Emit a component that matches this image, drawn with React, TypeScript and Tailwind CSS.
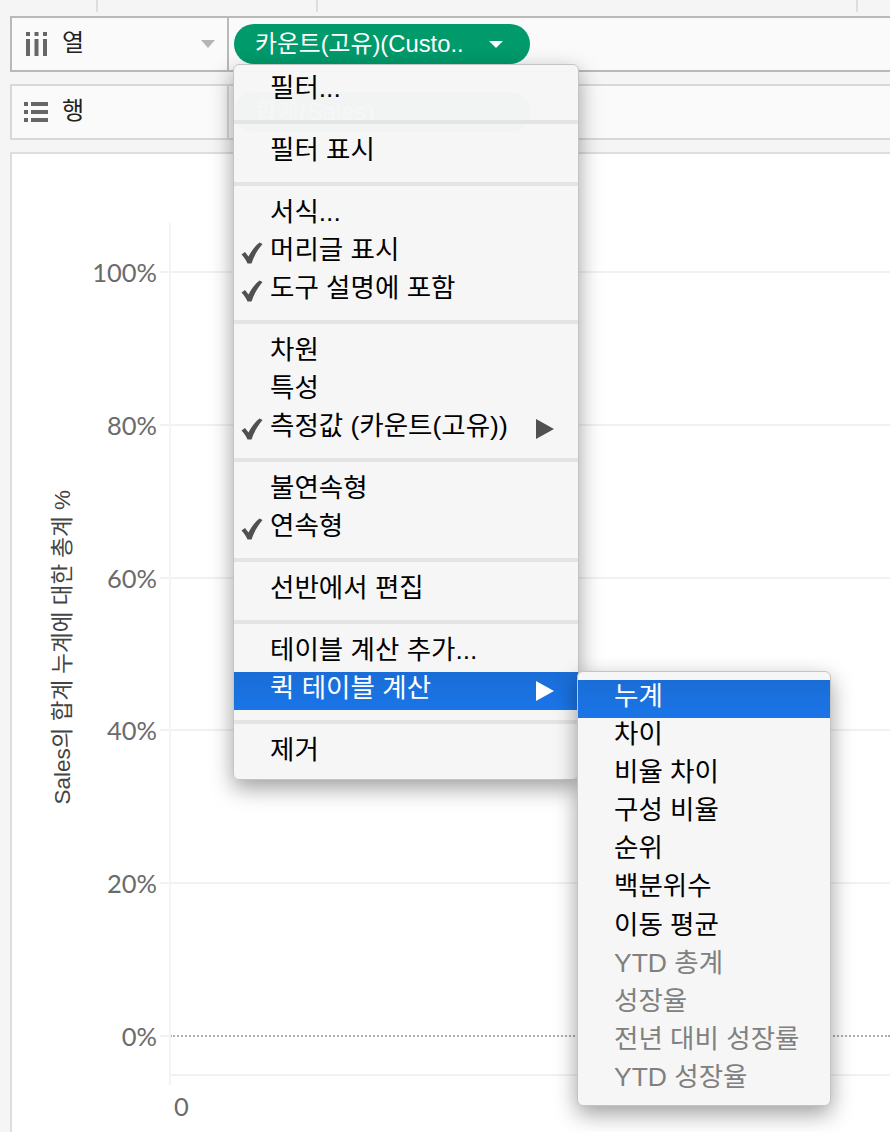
import React from "react";

const FONT = "font-['Liberation_Sans','Noto_Sans_CJK_KR',sans-serif]";

type Item = { label: string; checked?: boolean; arrow?: boolean; active?: boolean };

// sections of the pill's context menu
const MENU: Item[][] = [
  [{ label: "필터..." }],
  [{ label: "필터 표시" }],
  [
    { label: "서식..." },
    { label: "머리글 표시", checked: true },
    { label: "도구 설명에 포함", checked: true },
  ],
  [
    { label: "차원" },
    { label: "특성" },
    { label: "측정값 (카운트(고유))", checked: true, arrow: true },
  ],
  [{ label: "불연속형" }, { label: "연속형", checked: true }],
  [{ label: "선반에서 편집" }],
  [{ label: "테이블 계산 추가..." }, { label: "퀵 테이블 계산", arrow: true, active: true }],
  [{ label: "제거" }],
];

const SUBMENU = [
  { label: "누계", active: true },
  { label: "차이" },
  { label: "비율 차이" },
  { label: "구성 비율" },
  { label: "순위" },
  { label: "백분위수" },
  { label: "이동 평균" },
  { label: "YTD 총계", disabled: true },
  { label: "성장율", disabled: true },
  { label: "전년 대비 성장률", disabled: true },
  { label: "YTD 성장율", disabled: true },
];

const TICKS = ["100%", "80%", "60%", "40%", "20%"];

function CheckMark() {
  return (
    <svg viewBox="0 0 22 22" className="absolute left-[7px] top-[8px] h-[22px] w-[22px]">
      <path d="M0.5 12.5 L4 10 L7.5 14.5 C10 9.5 13.5 4.5 18.5 0.5 L21.5 2 C16.5 8 13 14 10.5 21.5 L6.5 21.5 C5 18 3 15 0.5 12.5 Z" fill="#505050" />
    </svg>
  );
}

function MenuRow({ item }: { item: Item }) {
  return (
    <div
      className={`relative flex h-[38px] items-start pl-[36px] pr-[24px] text-[26.5px] leading-[32px] ${
        item.active ? "bg-gradient-to-b from-[#1a6dd6] to-[#1a75e8] text-white" : "text-black"
      }`}
    >
      {item.checked && <CheckMark />}
      <span className="flex-1 whitespace-nowrap">{item.label}</span>
      {item.arrow && (
        <svg viewBox="0 0 18 20" className="mt-[9px] h-5 w-[18px]">
          <path d="M0 0 L18 10 L0 20 Z" fill={item.active ? "#ffffff" : "#505050"} />
        </svg>
      )}
    </div>
  );
}

function ContextMenu() {
  return (
    <div className="absolute left-[233px] top-[64px] z-10 w-[346px] rounded-md border border-[#c4c4c4] bg-[#f6f6f6]/[.98] pt-[7px] shadow-[0_8px_22px_rgba(0,0,0,0.38)]">
      {MENU.map((section, i) => (
        <div key={i} className={i > 0 ? "border-t-4 border-[#e4e4e4] pt-[10px]" : ""}>
          {section.map((item) => (
            <MenuRow key={item.label} item={item} />
          ))}
          <div className={i === MENU.length - 1 ? "h-[7px]" : "h-[10px]"} />
        </div>
      ))}
    </div>
  );
}

function SubMenu() {
  return (
    <div className="absolute left-[577px] top-[671px] z-20 w-[254px] rounded-md border border-[#c4c4c4] bg-[#f6f6f6] pb-[6px] pt-2 shadow-[0_8px_22px_rgba(0,0,0,0.38)]">
      {SUBMENU.map((item) => (
        <div
          key={item.label}
          className={`h-[38.1px] whitespace-nowrap pl-[36px] text-[26.5px] leading-[32px] ${
            item.active
              ? "bg-gradient-to-b from-[#1a6dd6] to-[#1a75e8] text-white"
              : item.disabled
                ? "text-[#808080]"
                : "text-black"
          }`}
        >
          {item.label}
        </div>
      ))}
    </div>
  );
}

function Pill({ label, up }: { label: string; up?: boolean }) {
  return (
    <div className="ml-[5px] flex h-10 w-[296px] items-center rounded-full bg-[#009a6b] pl-[21px] text-[23.8px] text-white">
      <span className="w-[234px] whitespace-nowrap">{label}</span>
      {up ? (
        <svg viewBox="0 0 14 10" className="h-[10px] w-[14px]">
          <path d="M7 1 L13 9 L1 9 Z" fill="none" stroke="#ffffff" strokeWidth="1" />
        </svg>
      ) : (
        <svg viewBox="0 0 14 7" className="h-[7px] w-[14px]">
          <path d="M0 0 L14 0 L7 7 Z" fill="#ffffff" />
        </svg>
      )}
    </div>
  );
}

function Shelf({
  icon,
  label,
  border,
  caret,
  pill,
}: {
  icon: React.ReactNode;
  label: string;
  border: string;
  caret?: boolean;
  pill: React.ReactNode;
}) {
  return (
    <div className={`ml-[10px] flex h-14 items-stretch border-y-2 border-l-2 bg-[#fafafa] ${border}`}>
      <div className={`flex w-[217px] items-center border-r-2 ${border}`}>
        <div className="ml-[12px] flex w-[38px] justify-start">{icon}</div>
        <span className="-mt-[2px] text-[24px] text-[#222222]">{label}</span>
        {caret && (
          <svg viewBox="0 0 14 8" className="ml-auto mr-[12px] h-2 w-[14px]">
            <path d="M0 0 L14 0 L7 8 Z" fill="#b5b5b5" />
          </svg>
        )}
      </div>
      <div className="flex items-center">{pill}</div>
    </div>
  );
}

function ColumnsIcon() {
  return (
    <svg viewBox="0 0 21 24" className="ml-[2px] h-6 w-[21px]" fill="#666666">
      <rect x="0" y="0" width="4" height="4" />
      <rect x="0" y="7" width="4" height="17" />
      <rect x="8.5" y="0" width="4" height="4" />
      <rect x="8.5" y="7" width="4" height="17" />
      <rect x="17" y="0" width="4" height="4" />
      <rect x="17" y="7" width="4" height="17" />
    </svg>
  );
}

function RowsIcon() {
  return (
    <svg viewBox="0 0 24 20" className="h-5 w-6" fill="#666666">
      <rect x="0" y="0" width="4" height="4" />
      <rect x="7" y="0" width="17" height="4" />
      <rect x="0" y="8" width="4" height="4" />
      <rect x="7" y="8" width="17" height="4" />
      <rect x="0" y="16" width="4" height="4" />
      <rect x="7" y="16" width="17" height="4" />
    </svg>
  );
}

function Chart() {
  return (
    <div className="relative ml-[10px] mt-3 flex h-[980px] border-l-2 border-t-2 border-[#dedede] bg-white pt-[117px]">
      {/* y axis rule */}
      <div className="absolute left-[157px] top-[69px] h-[862px] w-[2px] bg-[#f4f4f4]" />
      <div className="flex w-[64px] shrink-0 items-start justify-end pt-[219px]">
        <span className="rotate-180 whitespace-nowrap text-[22.5px] leading-[26px] text-[#444444] [text-orientation:sideways] [writing-mode:vertical-rl]">
          Sales의 합계 누계에 대한 총계 %
        </span>
      </div>
      <div className="flex min-w-0 flex-1 flex-col font-['Lato','Noto_Sans_CJK_KR',sans-serif] text-[25.5px] text-[#6b6b6b]">
        {TICKS.map((tick) => (
          <div key={tick} className="flex h-[152.8px] shrink-0 items-start">
            <span className="-mt-[13px] w-[81px] text-right leading-[28px]">{tick}</span>
            <div className="ml-[3px] h-[2px] flex-1 bg-[#f1f1f1]" />
          </div>
        ))}
        <div className="flex h-[39px] shrink-0 items-start">
          <span className="-mt-[13px] w-[81px] text-right leading-[28px]">0%</span>
          <div className="ml-[3px] h-[2px] w-[10px] bg-[#f1f1f1]" />
          <div className="flex-1 border-t-2 border-dotted border-[#adadad]" />
        </div>
        <div className="ml-[94px] h-[2px] bg-[#f1f1f1]" />
        <span className="ml-[98px] mt-[16px] leading-[28px]">0</span>
      </div>
    </div>
  );
}

export default function App() {
  return (
    <div className={`relative h-[1132px] w-[890px] overflow-hidden bg-[#f5f5f5] ${FONT}`}>
      <div className="flex h-3 pl-[96px]">
        <div className="h-full w-[2px] bg-[#dedede]" />
        <div className="ml-[218px] h-full w-[2px] bg-[#dedede]" />
        <div className="ml-[538px] h-full w-[2px] bg-[#dedede]" />
      </div>
      <div className="mt-1">
        <Shelf
          icon={<ColumnsIcon />}
          label="열"
          border="border-[#b9b9b9]"
          caret
          pill={<Pill label="카운트(고유)(Custo.." />}
        />
      </div>
      <div className="mt-3">
        <Shelf
          icon={<RowsIcon />}
          label="행"
          border="border-[#d8d8d8]"
          pill={<Pill label="합계(Sales)" up />}
        />
      </div>
      <Chart />
      <ContextMenu />
      <SubMenu />
    </div>
  );
}
